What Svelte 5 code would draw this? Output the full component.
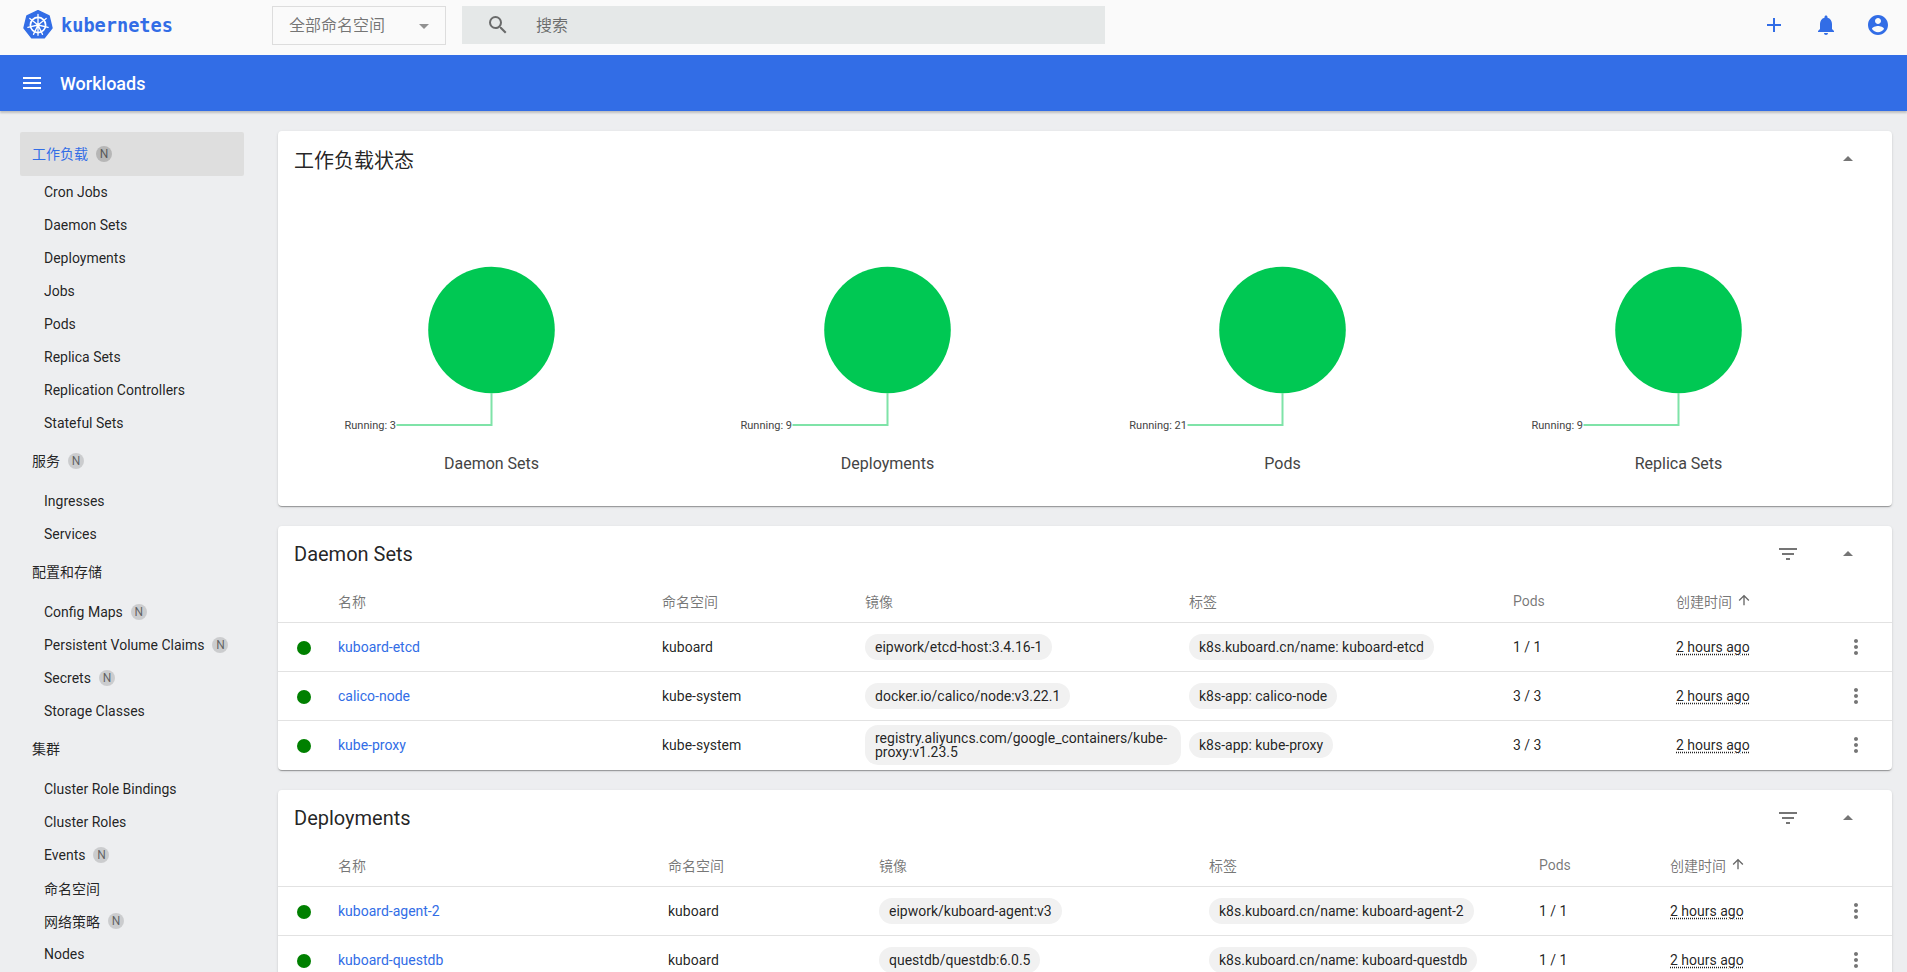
<script>
  const ds = [
    { n: 'kuboard-etcd', ns: 'kuboard', img: ['eipwork/etcd-host:3.4.16-1'], lb: 'k8s.kuboard.cn/name: kuboard-etcd', p: '1 / 1' },
    { n: 'calico-node', ns: 'kube-system', img: ['docker.io/calico/node:v3.22.1'], lb: 'k8s-app: calico-node', p: '3 / 3' },
    { n: 'kube-proxy', ns: 'kube-system', img: ['registry.aliyuncs.com/google_containers/kube-proxy:v1.23.5'], lb: 'k8s-app: kube-proxy', p: '3 / 3' }
  ];
  const dp = [
    { n: 'kuboard-agent-2', ns: 'kuboard', img: ['eipwork/kuboard-agent:v3'], lb: 'k8s.kuboard.cn/name: kuboard-agent-2', p: '1 / 1' },
    { n: 'kuboard-questdb', ns: 'kuboard', img: ['questdb/questdb:6.0.5'], lb: 'k8s.kuboard.cn/name: kuboard-questdb', p: '1 / 1' }
  ];
  const charts = [
    { t: 'Daemon Sets', v: 3 }, { t: 'Deployments', v: 9 }, { t: 'Pods', v: 21 }, { t: 'Replica Sets', v: 9 }
  ];
  const nav = [
    { h: '工作负载', badge: true, active: true, items: [['Cron Jobs'], ['Daemon Sets'], ['Deployments'], ['Jobs'], ['Pods'], ['Replica Sets'], ['Replication Controllers'], ['Stateful Sets']] },
    { h: '服务', badge: true, items: [['Ingresses'], ['Services']] },
    { h: '配置和存储', items: [['Config Maps', 1], ['Persistent Volume Claims', 1], ['Secrets', 1], ['Storage Classes']] },
    { h: '集群', items: [['Cluster Role Bindings'], ['Cluster Roles'], ['Events', 1], ['命名空间'], ['网络策略', 1], ['Nodes']] }
  ];
  const tables = [
    { title: 'Daemon Sets', cls: 'ds', rows: ds },
    { title: 'Deployments', cls: 'dp', rows: dp }
  ];
</script>

<div class="page">
  <header class="toolbar">
    <div class="brand">
      <svg class="logo" viewBox="0 0 30 30">
        <path d="M15 0.6 L26.1 5.9 L29 18 L21.3 27.8 L8.7 27.8 L1 18 L3.9 5.9 Z" fill="#326de6" stroke="#326de6" stroke-width="1.4" stroke-linejoin="round"/>
        <g fill="none" stroke="#fff" stroke-linecap="round">
          <circle cx="15" cy="15" r="7.6" stroke-width="1.7"/>
          <path stroke-width="1.3" d="M15 4.5V25.3M15 15L23.2 8.4M15 15L25.1 17.3M15 15L19.5 24.4M15 15L10.5 24.4M15 15L4.9 17.3M15 15L6.8 8.4"/>
        </g>
        <circle cx="15" cy="15" r="1.6" fill="#fff"/>
      </svg>
      <span class="wordmark">kubernetes</span>
    </div>
    <div class="select"><span class="up1">全部命名空间</span><i class="caret"></i></div>
    <div class="search">
      <svg class="i24 grey" viewBox="0 0 24 24"><path d="M15.5 14h-.79l-.28-.27A6.47 6.47 0 0 0 16 9.5 6.5 6.5 0 1 0 9.5 16c1.61 0 3.09-.59 4.23-1.57l.27.28v.79l5 4.99L20.49 19l-4.99-5zm-6 0C7.01 14 5 11.99 5 9.5S7.01 5 9.5 5 14 7.01 14 9.5 11.99 14 9.5 14z"/></svg>
      <span class="up1">搜索</span>
    </div>
    <div class="actions">
      <svg class="i24 blue" viewBox="0 0 24 24"><path d="M19 13h-6v6h-2v-6H5v-2h6V5h2v6h6v2z"/></svg>
      <svg class="i24 blue" viewBox="0 0 24 24"><path d="M12 22c1.1 0 2-.9 2-2h-4c0 1.1.89 2 2 2zm6-6v-5c0-3.07-1.64-5.64-4.5-6.32V4c0-.83-.67-1.5-1.5-1.5s-1.5.67-1.5 1.5v.68C7.63 5.36 6 7.92 6 11v5l-2 2v1h16v-1l-2-2z"/></svg>
      <svg class="i24 blue" viewBox="0 0 24 24"><path d="M12 2C6.48 2 2 6.48 2 12s4.48 10 10 10 10-4.48 10-10S17.52 2 12 2zm0 3c1.66 0 3 1.34 3 3s-1.34 3-3 3-3-1.34-3-3 1.34-3 3-3zm0 14.2c-2.5 0-4.71-1.28-6-3.22.03-1.99 4-3.08 6-3.08 1.99 0 5.97 1.09 6 3.08-1.29 1.94-3.5 3.22-6 3.22z"/></svg>
    </div>
  </header>

  <div class="bluebar">
    <svg class="i24 white" viewBox="0 0 24 24"><path d="M3 18h18v-2H3v2zm0-5h18v-2H3v2zm0-7v2h18V6H3z"/></svg>
    <span>Workloads</span>
  </div>

  <div class="body">
    <nav class="side">
      {#each nav as g}
        <div class="group" class:active={g.active}>
          <span class="gt">{g.h}</span>
          {#if g.badge}<b class="badge">N</b>{/if}
        </div>
        {#each g.items as it}
          <div class="item"><span>{it[0]}</span>{#if it[1]}<b class="badge">N</b>{/if}</div>
        {/each}
      {/each}
    </nav>

    <main class="main">
      <section class="card">
        <div class="head">
          <h2>工作负载状态</h2>
          <svg class="i24 grey up" viewBox="0 0 24 24"><path d="M7 14l5-5 5 5z"/></svg>
        </div>
        <div class="charts">
          {#each charts as c}
            <svg class="chart" viewBox="0 0 395 320" width="395" height="320">
              <circle cx="197.5" cy="143" r="63.3" fill="#00c853"/>
              <path d="M197.5 206V238H102.5" fill="none" stroke="#7fe3a8" stroke-width="2"/>
              <text x="102" y="241.5" text-anchor="end" class="lbl">Running: {c.v}</text>
              <text x="197.5" y="282" text-anchor="middle" class="ttl">{c.t}</text>
            </svg>
          {/each}
        </div>
      </section>

      {#each tables as t}
        <section class="card">
          <div class="head">
            <h2>{t.title}</h2>
            <svg class="i24 grey filter" viewBox="0 0 24 24"><path d="M10 18h4v-2h-4v2zM3 6v2h18V6H3zm3 7h12v-2H6v2z"/></svg>
            <svg class="i24 grey up" viewBox="0 0 24 24"><path d="M7 14l5-5 5 5z"/></svg>
          </div>
          <div class="row hdr {t.cls}">
            <span></span><span>名称</span><span>命名空间</span><span>镜像</span><span>标签</span><span class="pods">Pods</span>
            <span class="created">创建时间
              <svg viewBox="0 0 24 24"><path d="M4 12l1.41 1.41L11 7.83V20h2V7.83l5.58 5.59L20 12l-8-8-8 8z"/></svg>
            </span>
            <span></span>
          </div>
          {#each t.rows as r}
            <div class="row {t.cls}">
              <i class="dot"></i>
              <a href="#top">{r.n}</a>
              <span>{r.ns}</span>
              <span><span class="chip">{r.img[0]}</span></span>
              <span><span class="chip">{r.lb}</span></span>
              <span>{r.p}</span>
              <span class="ago">2 hours ago</span>
              <svg class="i24 grey kebab" viewBox="0 0 24 24"><path d="M12 8c1.1 0 2-.9 2-2s-.9-2-2-2-2 .9-2 2 .9 2 2 2zm0 2c-1.1 0-2 .9-2 2s.9 2 2 2 2-.9 2-2-.9-2-2-2zm0 6c-1.1 0-2 .9-2 2s.9 2 2 2 2-.9 2-2-.9-2-2-2z"/></svg>
            </div>
          {/each}
        </section>
      {/each}
    </main>
  </div>
</div>

<style>
  :global(html), :global(body) { margin: 0; height: 100%; overflow: hidden; }
  .page {
    height: 100vh; overflow: hidden; display: flex; flex-direction: column;
    background: #edeef0;
    font-family: Roboto, "Noto Sans CJK SC", sans-serif; font-size: 14px;
    color: rgba(0,0,0,.87);
  }
  .toolbar { height: 55px; box-sizing: border-box; flex: none; display: flex; align-items: center; background: #fafafa; padding: 0 17px 5px 23px; }
  .brand { width: 249px; display: flex; align-items: center; gap: 8px; height: 30px; flex: none; }
  .logo { width: 30px; height: 30px; display: block; }
  .wordmark { font-family: "DejaVu Sans Mono", monospace; font-size: 18.6px; font-weight: 700; color: #326de6; }
  .select { width: 174px; height: 39px; box-sizing: border-box; border: 1px solid #ddd; display: flex; align-items: center; justify-content: space-between; padding: 0 16px; font-size: 16px; color: rgba(0,0,0,.54); flex: none; margin-right: 16px; }
  .up1 { margin-top: -2px; }
  .caret { width: 0; height: 0; border: 5px solid transparent; border-top-color: rgba(0,0,0,.42); border-bottom: 0; margin-top: 2px; }
  .search { width: 643px; height: 38px; background: #e5e8e8; display: flex; align-items: center; gap: 26px; padding-left: 24px; box-sizing: border-box; font-size: 16px; color: rgba(0,0,0,.54); flex: none; }
  .actions { margin-left: auto; display: flex; gap: 28px; }
  .i24 { width: 24px; height: 24px; display: block; flex: none; }
  .blue { fill: #326de6; }
  .grey { fill: rgba(0,0,0,.54); }
  .white { fill: #fff; }
  .bluebar { height: 56px; flex: none; background: #326de6; color: #fff; display: flex; align-items: center; gap: 16px; padding-left: 20px; font-size: 18px; font-weight: 500; box-shadow: 0 2px 2px rgba(0,0,0,.2); position: relative; }
  .body { flex: 1; min-height: 0; display: flex; }
  .side { width: 278px; flex: none; box-sizing: border-box; padding: 21px 34px 0 20px; }
  .group { height: 45px; display: flex; align-items: center; padding-left: 12px; border-radius: 2px; }
  .gt { margin-top: -3px; }
  .group.active { height: 44px; margin-bottom: -1px; background: #dedede; color: #326de6; }
  .item { height: 33px; display: flex; align-items: center; padding-left: 24px; }
  .badge { width: 16px; height: 16px; border-radius: 50%; background: rgba(0,0,0,.14); color: rgba(0,0,0,.54); font-size: 12px; font-weight: 400; display: inline-flex; align-items: center; justify-content: center; margin-left: 8px; }
  .group .badge { margin-top: -1px; }
  .active .badge { background: rgba(0,0,0,.18); }
  .main { flex: 1; min-width: 0; padding: 20px 15px 0 0; display: flex; flex-direction: column; gap: 20px; }
  .card { background: #fff; border-radius: 4px; flex: none; padding-bottom: 1px; box-shadow: 0 2px 1px -1px rgba(0,0,0,.2), 0 1px 1px 0 rgba(0,0,0,.14), 0 1px 3px 0 rgba(0,0,0,.12); }
  .head { height: 56px; display: flex; align-items: center; padding: 0 32px 0 16px; }
  h2 { margin: 0; font-size: 20px; font-weight: 400; flex: 1; }
  .filter { margin-right: 36px; }
  .charts { display: grid; grid-template-columns: repeat(4, 1fr); justify-items: center; padding: 0 16px; height: 318px; }
  .chart { display: block; }
  .lbl { font-size: 11px; fill: #444; }
  .ttl { font-size: 16px; fill: #444; }
  .row { display: grid; align-items: center; height: 49px; border-top: 1px solid #e2e2e2; box-sizing: border-box; }
  .hdr { height: 40px; border-top: 0; color: rgba(0,0,0,.54); padding-bottom: 2px; }
  .ds { grid-template-columns: 60px 324px 203px 324px 324px 163px 176px 1fr; }
  .dp { grid-template-columns: 60px 330px 211px 330px 330px 131px 182px 1fr; }
  .dot { width: 14px; height: 14px; border-radius: 50%; background: #008000; margin: 1px 0 0 19px; display: block; }
  a { color: #326de6; text-decoration: none; }
  .chip { display: inline-block; background: #f1f1f1; border-radius: 13px; padding: 6px 10px; line-height: 14px; max-width: 296px; vertical-align: middle; word-break: break-word; }
  .created { display: flex; align-items: center; gap: 4px; }
  .created svg { width: 16px; height: 16px; fill: rgba(0,0,0,.6); margin-top: -2px; }
  .ago { text-decoration: underline dotted; text-underline-offset: 2px; }
  .kebab { margin-left: -8px; }
</style>
